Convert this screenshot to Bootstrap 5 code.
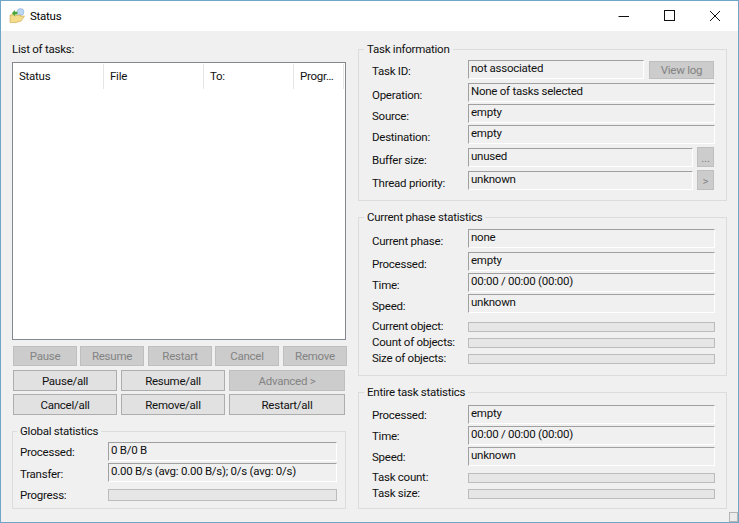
<!DOCTYPE html>
<html lang="en">
<head>
<meta charset="utf-8">
<title>Status</title>
<link rel="stylesheet" href="https://cdn.jsdelivr.net/npm/bootstrap@5.3.0/dist/css/bootstrap.min.css">
<style>
html,body{margin:0;height:523px;overflow:hidden;background:#f0f0f0}
body{font-family:Roboto,"Noto Sans",sans-serif;font-size:11.5px;letter-spacing:-.25px;line-height:16px;color:#111}
.win{width:739px;height:523px;border:1px solid #6fa5c6;background:#f0f0f0;position:relative;overflow:hidden}
.titlebar{height:30px;background:#fff}
.app-ico{margin-left:8px;margin-right:5px}
.title-txt{color:#000}
.ctl{margin-left:auto;margin-right:8px}
.panes{padding:10px 11px 0 11px;gap:12px}
.left-pane{width:334px}
.right-pane{width:369px}
.list-cap{margin-bottom:5px}
.task-list{height:278px;border:1px solid #828790;background:#fff}
.hdr-row{height:25px;margin-top:1px}
.hdr-cell{border-right:1px solid #e5e5e5;padding-left:6px;padding-top:4px;white-space:nowrap;overflow:hidden}
.w-a{width:91px}.w-b{width:100px}.w-c{width:90px}.w-d{width:50px}
.btn.btn-win{font-size:11.5px;letter-spacing:-.25px;line-height:16px;padding:0;border-radius:0;background:#e1e1e1;border:1px solid #adadad;color:#111;opacity:1}
.btn.btn-win:disabled{background:#ccc;border-color:#bfbfbf;color:#838383;opacity:1}
.bt-row1{margin-left:1px;margin-top:6px;height:20px;width:334px}
.bt-row2{margin-left:1px;margin-top:4px;height:21px}
.bt-row3{margin-left:1px;margin-top:3px;height:21px}
.bs{width:64px;height:20px}
.g3{margin-right:3px}.g4{margin-right:4px}
.bm{width:104px;height:21px}
.bl{width:116px;height:21px}
fieldset.grp{border:1px solid #dcdcdc;padding:0 11px 0 13px}
fieldset.grp>legend{float:none;width:auto;height:16px;margin:0 0 0 -8px;padding:0 3px;font-size:11.5px;line-height:16px}
.grp-left{margin-top:8px}
fieldset.grp-left{padding:0 8px 7px 7px}
fieldset.grp-left>legend{margin-left:-3px}
.grp-a{padding-bottom:10px!important}
.grp-b{margin-top:8px;padding-bottom:11px!important}
.grp-c{margin-top:8px;padding-bottom:9px!important}
.rw{height:19px}
.lb-r{width:96px;flex:none;padding-top:4px;white-space:nowrap}
.lb-r.up1{padding-top:3px}
.lb-r.up2{padding-top:2px}
.lb-l{width:88px;flex:none;padding-top:2px;white-space:nowrap}
.lb-l.dn1{padding-top:3px}
.fld{height:19px;border-top:1px solid #a0a0a0;border-left:1px solid #a0a0a0;border-bottom:1px solid #fff;border-right:1px solid #fff;padding-left:2px;line-height:15px;white-space:nowrap;overflow:hidden;flex:1 1 0;min-width:0}
.sp2{margin-top:2px}.sp4{margin-top:4px}.sp6{margin-top:6px}.sp7{margin-top:7px}.sp9{margin-top:9px}
.ct-a{padding-top:3px}.ct-b{padding-top:4px}.ct-c{padding-top:5px}.ct-l{padding-top:3px}
.btn.b-log{width:65px;height:18px;margin-left:5px;margin-right:1px;margin-top:1px;flex:none}
.btn.b-sm{width:17px;height:20px;margin-left:4px;margin-right:1px;margin-top:-1px;flex:none;line-height:20px}
.brw{height:10px}
.lb-b{width:96px;flex:none;line-height:8px;white-space:nowrap}
.lb-bl{width:88px;flex:none;line-height:12px;white-space:nowrap}
.progress.pb{height:10px;flex:1 1 0;border:1px solid #bcbcbc;background:#e6e6e6;border-radius:0}
.pb-l{height:12px!important}
.brw-l{height:12px}
.grip{position:absolute;right:0;bottom:0;width:9px;height:10px;border:1px solid #b4b4b4;background:#ececec}
</style>
</head>
<body>
<div class="win">
  <div class="titlebar d-flex align-items-center">
    <svg class="app-ico" width="16" height="16" viewBox="0 0 16 16">
      <circle cx="11.5" cy="4" r="3.4" fill="#bcd8f4" stroke="#8fb4dc" stroke-width=".7"/>
      <path d="M1 6.5h4l1 1.3h5v2l-7 0z" fill="#e8c868"/>
      <path d="M1 14.5 1 7.5 5 6.5l1 1.2 6-.7-.5 1.5 4-.6-3.3 5.2-6 1.6z" fill="#f3dc8c" stroke="#c9a64a" stroke-width=".6"/>
      <path d="M2.8 5.2 6 2v1.7h2.4v2.9H6v1.7z" fill="#4aa53a"/>
    </svg>
    <span class="title-txt">Status</span>
    <svg class="ctl" width="120" height="30" viewBox="0 0 120 30">
      <path d="M8.5 15.5H19" stroke="#111" fill="none"/>
      <rect x="54.5" y="9.5" width="10" height="10" stroke="#111" fill="none"/>
      <path d="M100 10l10 10M110 10l-10 10" stroke="#111" fill="none"/>
    </svg>
  </div>
  <div class="panes d-flex">
    <div class="left-pane">
      <div class="list-cap">List of tasks:</div>
      <div class="task-list">
        <div class="hdr-row d-flex">
          <div class="hdr-cell w-a">Status</div>
          <div class="hdr-cell w-b">File</div>
          <div class="hdr-cell w-c">To:</div>
          <div class="hdr-cell w-d">Progr…</div>
        </div>
      </div>
      <div class="bt-row1 d-flex text-nowrap">
        <button class="btn btn-win bs g3" disabled>Pause</button>
        <button class="btn btn-win bs g4" disabled>Resume</button>
        <button class="btn btn-win bs g3" disabled>Restart</button>
        <button class="btn btn-win bs g4" disabled>Cancel</button>
        <button class="btn btn-win bs" disabled>Remove</button>
      </div>
      <div class="bt-row2 d-flex">
        <button class="btn btn-win bm g4">Pause/all</button>
        <button class="btn btn-win bm g4">Resume/all</button>
        <button class="btn btn-win bl" disabled>Advanced &gt;</button>
      </div>
      <div class="bt-row3 d-flex">
        <button class="btn btn-win bm g4">Cancel/all</button>
        <button class="btn btn-win bm g4">Remove/all</button>
        <button class="btn btn-win bl">Restart/all</button>
      </div>
      <fieldset class="grp grp-left">
        <legend>Global statistics</legend>
        <div class="ct-l">
          <div class="rw d-flex"><div class="lb-l">Processed:</div><div class="fld">0 B/0 B</div></div>
          <div class="rw d-flex sp2"><div class="lb-l dn1">Transfer:</div><div class="fld">0.00 B/s (avg: 0.00 B/s); 0/s (avg: 0/s)</div></div>
          <div class="brw-l d-flex sp7"><div class="lb-bl">Progress:</div><div class="progress pb pb-l"></div></div>
        </div>
      </fieldset>
    </div>
    <div class="right-pane">
      <fieldset class="grp grp-a">
        <legend>Task information</legend>
        <div class="ct-a">
          <div class="rw d-flex"><div class="lb-r up1">Task ID:</div><div class="fld">not associated</div><button class="btn btn-win b-log" disabled>View log</button></div>
          <div class="rw d-flex sp4"><div class="lb-r">Operation:</div><div class="fld">None of tasks selected</div></div>
          <div class="rw d-flex sp2"><div class="lb-r">Source:</div><div class="fld">empty</div></div>
          <div class="rw d-flex sp2"><div class="lb-r">Destination:</div><div class="fld">empty</div></div>
          <div class="rw d-flex sp4"><div class="lb-r">Buffer size:</div><div class="fld">unused</div><button class="btn btn-win b-sm" disabled>...</button></div>
          <div class="rw d-flex sp4"><div class="lb-r">Thread priority:</div><div class="fld">unknown</div><button class="btn btn-win b-sm" disabled>&gt;</button></div>
        </div>
      </fieldset>
      <fieldset class="grp grp-b">
        <legend>Current phase statistics</legend>
        <div class="ct-b">
          <div class="rw d-flex"><div class="lb-r">Current phase:</div><div class="fld">none</div></div>
          <div class="rw d-flex sp4"><div class="lb-r">Processed:</div><div class="fld">empty</div></div>
          <div class="rw d-flex sp2"><div class="lb-r">Time:</div><div class="fld">00:00 / 00:00 (00:00)</div></div>
          <div class="rw d-flex sp2"><div class="lb-r">Speed:</div><div class="fld">unknown</div></div>
          <div class="brw d-flex sp9"><div class="lb-b">Current object:</div><div class="progress pb"></div></div>
          <div class="brw d-flex sp6"><div class="lb-b">Count of objects:</div><div class="progress pb"></div></div>
          <div class="brw d-flex sp6"><div class="lb-b">Size of objects:</div><div class="progress pb"></div></div>
        </div>
      </fieldset>
      <fieldset class="grp grp-c">
        <legend>Entire task statistics</legend>
        <div class="ct-c">
          <div class="rw d-flex"><div class="lb-r up2">Processed:</div><div class="fld">empty</div></div>
          <div class="rw d-flex sp2"><div class="lb-r up2">Time:</div><div class="fld">00:00 / 00:00 (00:00)</div></div>
          <div class="rw d-flex sp2"><div class="lb-r up2">Speed:</div><div class="fld">unknown</div></div>
          <div class="brw d-flex sp7"><div class="lb-b">Task count:</div><div class="progress pb"></div></div>
          <div class="brw d-flex sp6"><div class="lb-b">Task size:</div><div class="progress pb"></div></div>
        </div>
      </fieldset>
    </div>
  </div>
  <div class="grip"></div>
</div>
<script src="https://cdn.jsdelivr.net/npm/bootstrap@5.3.0/dist/js/bootstrap.bundle.min.js"></script>
</body>
</html>
